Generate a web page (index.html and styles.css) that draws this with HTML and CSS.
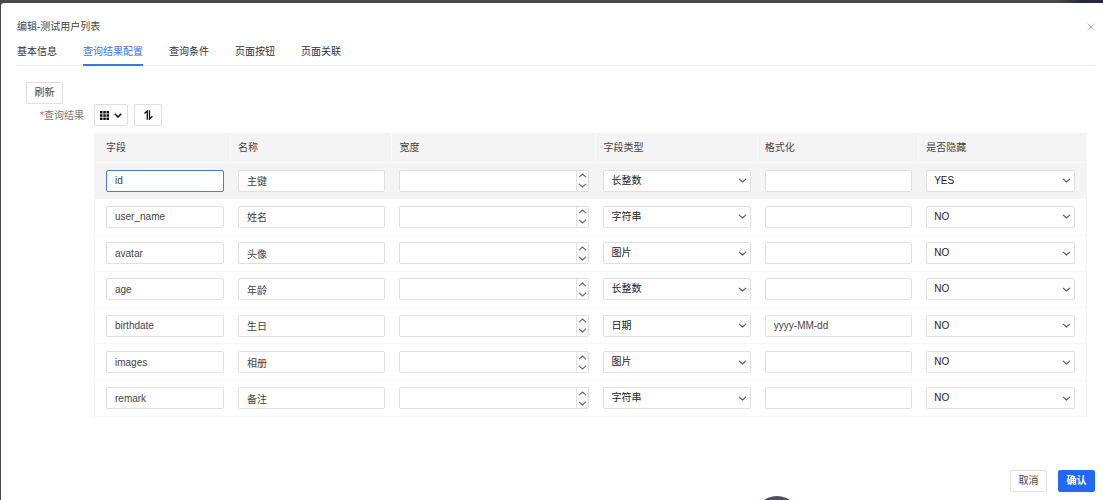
FILE: index.html
```html
<!DOCTYPE html>
<html lang="zh-CN">
<head>
<meta charset="utf-8">
<title>编辑-测试用户列表</title>
<link rel="stylesheet" href="styles.css">
</head>
<body>
<svg class="sprite" aria-hidden="true">
  <symbol id="up" viewBox="0 0 9 5"><path d="M1 4.2 4.5 1 8 4.2" fill="none" stroke="currentColor" stroke-width="1.1"/></symbol>
  <symbol id="down" viewBox="0 0 9 5"><path d="M1 .8 4.5 4 8 .8" fill="none" stroke="currentColor" stroke-width="1.1"/></symbol>
</svg>
<div class="dialog" role="dialog" aria-labelledby="title">
  <header class="dialog-head">
    <h1 class="title" id="title">编辑-测试用户列表</h1>
    <button class="close" type="button" aria-label="关闭"><svg width="8" height="8" viewBox="0 0 8 8"><path d="M.7.7 7.3 7.3M7.3.7.7 7.3" stroke="currentColor" stroke-width=".8"/></svg></button>
  </header>
  <nav class="tabs">
    <a class="tab" href="#base">基本信息</a>
    <a class="tab active" href="#result">查询结果配置</a>
    <a class="tab" href="#condition">查询条件</a>
    <a class="tab" href="#button">页面按钮</a>
    <a class="tab" href="#relation">页面关联</a>
  </nav>
  <main class="content">
    <button class="btn" type="button">刷新</button>
    <div class="field">
      <div class="label"><span class="required">*</span>查询结果</div>
      <div class="field-body">
        <div class="tools">
          <button class="btn columns-btn" type="button" aria-label="列设置">
            <svg width="9" height="9" viewBox="0 0 9 9" fill="currentColor"><path d="M0 0h2.5v2.5H0zM3.3 0h2.5v2.5H3.3zM6.5 0H9v2.5H6.5zM0 3.3h2.5v2.5H0zM3.3 3.3h2.5v2.5H3.3zM6.5 3.3H9v2.5H6.5zM0 6.5h2.5V9H0zM3.3 6.5h2.5V9H3.3zM6.5 6.5H9V9H6.5z"/></svg>
            <svg width="8" height="5" viewBox="0 0 8 5"><path d="M.7.7 4 4 7.3.7" fill="none" stroke="currentColor" stroke-width="1.5"/></svg>
          </button>
          <button class="btn sort-btn" type="button" aria-label="排序">
            <svg width="9" height="10" viewBox="0 0 9 10"><path d="M.5 3.6 3.3 1V9.7M5.5.3V9L8.4 6.2" fill="none" stroke="currentColor" stroke-width="1.3"/></svg>
          </button>
        </div>
        <table class="grid">
          <colgroup><col class="c-field"><col class="c-name"><col class="c-width"><col class="c-type"><col class="c-format"><col class="c-hidden"></colgroup>
          <thead>
            <tr><th>字段</th><th>名称</th><th>宽度</th><th>字段类型</th><th>格式化</th><th>是否隐藏</th></tr>
          </thead>
          <tbody>
            <tr class="current">
              <td><input class="control focused" aria-label="字段" value="id"></td>
              <td><input class="control" aria-label="名称" value="主键"></td>
              <td><div class="number"><input class="number-input" aria-label="宽度"><span class="steps"><button class="step" type="button" aria-label="增加"><svg class="arrow"><use href="#up"/></svg></button><button class="step" type="button" aria-label="减少"><svg class="arrow"><use href="#down"/></svg></button></span></div></td>
              <td><div class="select"><select class="control" aria-label="字段类型"><option>长整数</option></select><svg class="arrow"><use href="#down"/></svg></div></td>
              <td><input class="control" aria-label="格式化"></td>
              <td><div class="select"><select class="control" aria-label="是否隐藏"><option>YES</option><option>NO</option></select><svg class="arrow"><use href="#down"/></svg></div></td>
            </tr>
            <tr>
              <td><input class="control" aria-label="字段" value="user_name"></td>
              <td><input class="control" aria-label="名称" value="姓名"></td>
              <td><div class="number"><input class="number-input" aria-label="宽度"><span class="steps"><button class="step" type="button" aria-label="增加"><svg class="arrow"><use href="#up"/></svg></button><button class="step" type="button" aria-label="减少"><svg class="arrow"><use href="#down"/></svg></button></span></div></td>
              <td><div class="select"><select class="control" aria-label="字段类型"><option>字符串</option></select><svg class="arrow"><use href="#down"/></svg></div></td>
              <td><input class="control" aria-label="格式化"></td>
              <td><div class="select"><select class="control" aria-label="是否隐藏"><option>NO</option><option>YES</option></select><svg class="arrow"><use href="#down"/></svg></div></td>
            </tr>
            <tr>
              <td><input class="control" aria-label="字段" value="avatar"></td>
              <td><input class="control" aria-label="名称" value="头像"></td>
              <td><div class="number"><input class="number-input" aria-label="宽度"><span class="steps"><button class="step" type="button" aria-label="增加"><svg class="arrow"><use href="#up"/></svg></button><button class="step" type="button" aria-label="减少"><svg class="arrow"><use href="#down"/></svg></button></span></div></td>
              <td><div class="select"><select class="control" aria-label="字段类型"><option>图片</option></select><svg class="arrow"><use href="#down"/></svg></div></td>
              <td><input class="control" aria-label="格式化"></td>
              <td><div class="select"><select class="control" aria-label="是否隐藏"><option>NO</option><option>YES</option></select><svg class="arrow"><use href="#down"/></svg></div></td>
            </tr>
            <tr>
              <td><input class="control" aria-label="字段" value="age"></td>
              <td><input class="control" aria-label="名称" value="年龄"></td>
              <td><div class="number"><input class="number-input" aria-label="宽度"><span class="steps"><button class="step" type="button" aria-label="增加"><svg class="arrow"><use href="#up"/></svg></button><button class="step" type="button" aria-label="减少"><svg class="arrow"><use href="#down"/></svg></button></span></div></td>
              <td><div class="select"><select class="control" aria-label="字段类型"><option>长整数</option></select><svg class="arrow"><use href="#down"/></svg></div></td>
              <td><input class="control" aria-label="格式化"></td>
              <td><div class="select"><select class="control" aria-label="是否隐藏"><option>NO</option><option>YES</option></select><svg class="arrow"><use href="#down"/></svg></div></td>
            </tr>
            <tr>
              <td><input class="control" aria-label="字段" value="birthdate"></td>
              <td><input class="control" aria-label="名称" value="生日"></td>
              <td><div class="number"><input class="number-input" aria-label="宽度"><span class="steps"><button class="step" type="button" aria-label="增加"><svg class="arrow"><use href="#up"/></svg></button><button class="step" type="button" aria-label="减少"><svg class="arrow"><use href="#down"/></svg></button></span></div></td>
              <td><div class="select"><select class="control" aria-label="字段类型"><option>日期</option></select><svg class="arrow"><use href="#down"/></svg></div></td>
              <td><input class="control" aria-label="格式化" value="yyyy-MM-dd"></td>
              <td><div class="select"><select class="control" aria-label="是否隐藏"><option>NO</option><option>YES</option></select><svg class="arrow"><use href="#down"/></svg></div></td>
            </tr>
            <tr>
              <td><input class="control" aria-label="字段" value="images"></td>
              <td><input class="control" aria-label="名称" value="相册"></td>
              <td><div class="number"><input class="number-input" aria-label="宽度"><span class="steps"><button class="step" type="button" aria-label="增加"><svg class="arrow"><use href="#up"/></svg></button><button class="step" type="button" aria-label="减少"><svg class="arrow"><use href="#down"/></svg></button></span></div></td>
              <td><div class="select"><select class="control" aria-label="字段类型"><option>图片</option></select><svg class="arrow"><use href="#down"/></svg></div></td>
              <td><input class="control" aria-label="格式化"></td>
              <td><div class="select"><select class="control" aria-label="是否隐藏"><option>NO</option><option>YES</option></select><svg class="arrow"><use href="#down"/></svg></div></td>
            </tr>
            <tr>
              <td><input class="control" aria-label="字段" value="remark"></td>
              <td><input class="control" aria-label="名称" value="备注"></td>
              <td><div class="number"><input class="number-input" aria-label="宽度"><span class="steps"><button class="step" type="button" aria-label="增加"><svg class="arrow"><use href="#up"/></svg></button><button class="step" type="button" aria-label="减少"><svg class="arrow"><use href="#down"/></svg></button></span></div></td>
              <td><div class="select"><select class="control" aria-label="字段类型"><option>字符串</option></select><svg class="arrow"><use href="#down"/></svg></div></td>
              <td><input class="control" aria-label="格式化"></td>
              <td><div class="select"><select class="control" aria-label="是否隐藏"><option>NO</option><option>YES</option></select><svg class="arrow"><use href="#down"/></svg></div></td>
            </tr>
          </tbody>
        </table>
      </div>
    </div>
  </main>
  <footer class="actions">
    <button class="btn" type="button">取消</button>
    <button class="btn primary" type="button">确认</button>
  </footer>
</div>
<div class="floating"></div>
</body>
</html>
```
FILE: styles.css
```css
* { box-sizing: border-box; }

body {
  margin: 0;
  min-height: 100vh;
  padding: 3px 0 0 1px;
  display: flex;
  overflow: hidden;
  background: linear-gradient(90deg, #48484a 96%, #25283c 98%);
  color: #444;
  font: 10px/14px "Liberation Sans", "Noto Sans CJK SC", sans-serif;
}

button, input, select { font: inherit; color: inherit; margin: 0; }
button { padding: 0; cursor: pointer; }
.sprite { position: absolute; width: 0; height: 0; }

.dialog {
  flex: 1;
  min-width: 0;
  display: flex;
  flex-direction: column;
  padding: 17px 8px 8px 16px;
  background: #fff;
  border-radius: 3px 0 0 0;
}

.dialog-head { display: flex; justify-content: space-between; }
.title { margin: 0; font-size: 10px; font-weight: 400; }
.close { display: flex; align-items: center; border: 0; background: none; color: #aaa; }

.tabs {
  display: flex;
  gap: 26px;
  padding-top: 6px;
  box-shadow: inset 0 -1px #eee;
}
.tab {
  padding: 5px 0;
  border-bottom: 2px solid transparent;
  color: #333;
  text-decoration: none;
}
.tab.active { color: #3a76e6; border-color: #3a76e6; }

.content { flex: 1; padding: 16px 8px 0 9px; }

.btn {
  display: inline-flex;
  align-items: center;
  justify-content: center;
  min-width: 37px;
  height: 22px;
  border: 1px solid #dfdfdf;
  border-radius: 2px;
  background: #fff;
  vertical-align: top;
}
.btn.primary { border-color: #2468f2; background: #2468f2; color: #fff; font-weight: 700; }

.field { display: flex; }
.label { width: 58px; padding-top: 5px; text-align: right; color: #777; }
.required { color: #e8504f; }
.field-body { flex: 1; min-width: 0; padding-left: 10px; }
.tools { display: flex; gap: 6px; padding-bottom: 7px; }
.columns-btn, .sort-btn { color: #111; }
.columns-btn { min-width: 34px; gap: 5px; }
.sort-btn { min-width: 28px; }

.grid {
  width: 100%;
  height: 284px;
  table-layout: fixed;
  border-spacing: 0;
  box-shadow: inset 0 0 0 1px #f6f6f6;
}
.c-field { width: 13.8%; }
.c-name, .c-type, .c-format { width: 16.25%; }
.c-width { width: 20.55%; }
.c-hidden { width: 16.9%; }
.grid th {
  height: 30px;
  padding: 0 7px;
  background: #f4f4f4;
  border-right: 1px solid #fafafa;
  border-bottom: 1px solid #fafafa;
  font-weight: 400;
  text-align: left;
}
.grid td { height: 36px; padding: 0 7px; border-bottom: 1px solid #f6f6f6; }
.grid th:first-child, .grid td:first-child { padding-left: 12px; }
.grid th:last-child, .grid td:last-child { padding-right: 12px; }
.current td { background: #f4f4f4; }

.control, .number {
  display: block;
  width: 100%;
  height: 22px;
  padding: 0 8px;
  border: 1px solid #dfdfdf;
  border-radius: 2px;
  background: #fff;
  outline: 0;
}
.focused { border-color: #4a80dd; }

.number { display: flex; padding: 0; }
.number-input { flex: 1; min-width: 0; padding: 0 8px; border: 0; background: none; outline: 0; }
.steps { display: flex; flex-direction: column; width: 12px; border-left: 1px solid #e4e4e4; }
.step { flex: 1; display: flex; align-items: center; justify-content: center; border: 0; background: none; color: #666; }
.arrow { width: 9px; height: 5px; flex: none; }

.select { display: grid; align-items: center; }
.select > * { grid-area: 1 / 1; }
.select .control { appearance: none; padding: 0 18px 0 7px; color: #222; }
.select .arrow { justify-self: end; margin-right: 4px; color: #555; pointer-events: none; }

.actions { display: flex; justify-content: flex-end; gap: 11px; }

.floating {
  position: fixed;
  left: 70.4%;
  bottom: -42px;
  width: 46px;
  height: 46px;
  margin-left: -23px;
  border-radius: 50%;
  background: #4a5160;
}
```
